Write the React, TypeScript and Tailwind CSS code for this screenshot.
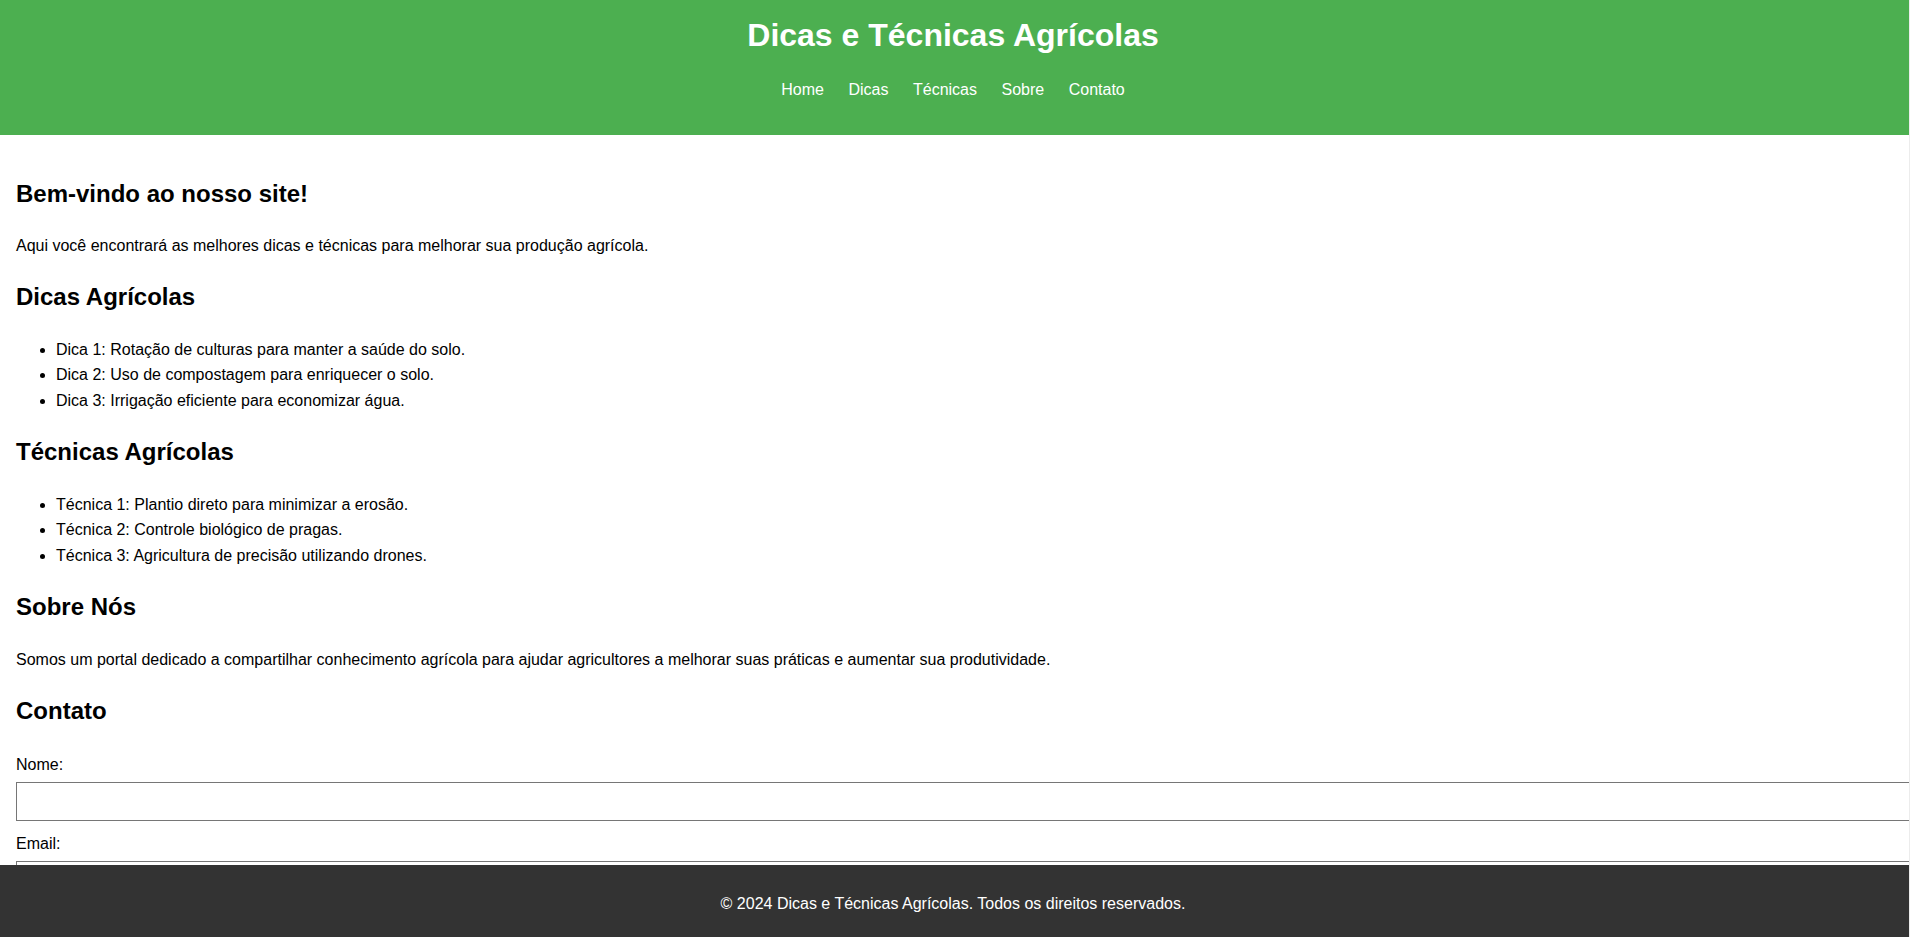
export default function App() {
    const navLinks = ['Home', 'Dicas', 'Técnicas', 'Sobre', 'Contato'];

    return (
        <div className="min-h-screen bg-white text-black font-['Liberation_Sans',Arial,sans-serif] text-[16px] leading-[1.6] overflow-x-hidden">
            <header className="bg-[#4CAF50] text-white text-center pt-[10px] pb-[32px] pr-1">
                <h1 className="text-[32px] font-bold leading-[51px]">Dicas e Técnicas Agrícolas</h1>
                <nav className="mt-[16px]">
                    <ul className="flex justify-center gap-[24.5px] leading-[25.6px]">
                        {navLinks.map((link) => (
                            <li key={link}>
                                <a href={`#${link.toLowerCase()}`} className="text-white no-underline">
                                    {link}
                                </a>
                            </li>
                        ))}
                    </ul>
                </nav>
            </header>

            <main className="px-4 pt-5 pb-[100px]">
                <section>
                    <h2 className="text-[24px] font-bold leading-[38.4px] mt-[19.92px]">Bem-vindo ao nosso site!</h2>
                    <p className="mt-[19.92px]">Aqui você encontrará as melhores dicas e técnicas para melhorar sua produção agrícola.</p>
                </section>

                <section id="dicas">
                    <h2 className="text-[24px] font-bold leading-[38.4px] mt-[19.92px]">Dicas Agrícolas</h2>
                    <ul className="list-disc pl-10 mt-[19.92px]">
                        <li>Dica 1: Rotação de culturas para manter a saúde do solo.</li>
                        <li>Dica 2: Uso de compostagem para enriquecer o solo.</li>
                        <li>Dica 3: Irrigação eficiente para economizar água.</li>
                    </ul>
                </section>

                <section id="tecnicas">
                    <h2 className="text-[24px] font-bold leading-[38.4px] mt-[19.92px]">Técnicas Agrícolas</h2>
                    <ul className="list-disc pl-10 mt-[19.92px]">
                        <li>Técnica 1: Plantio direto para minimizar a erosão.</li>
                        <li>Técnica 2: Controle biológico de pragas.</li>
                        <li>Técnica 3: Agricultura de precisão utilizando drones.</li>
                    </ul>
                </section>

                <section id="sobre">
                    <h2 className="text-[24px] font-bold leading-[38.4px] mt-[19.92px]">Sobre Nós</h2>
                    <p className="mt-[19.92px]">Somos um portal dedicado a compartilhar conhecimento agrícola para ajudar agricultores a melhorar suas práticas e aumentar sua produtividade.</p>
                </section>

                <section id="contato">
                    <h2 className="text-[24px] font-bold leading-[38.4px] mt-[19.92px]">Contato</h2>
                    <form className="mt-[21px]">
                        <label htmlFor="nome" className="block">Nome:</label>
                        <input id="nome" type="text" className="block mt-[5px] w-[calc(100%+18px)] h-[38.4px] px-2 border border-[#767676] bg-white" />
                        <label htmlFor="email" className="block mt-[10px]">Email:</label>
                        <input id="email" type="email" className="block mt-[5px] w-[calc(100%+18px)] h-[38.4px] px-2 border border-[#767676] bg-white" />
                        <label htmlFor="mensagem" className="block mt-[10px]">Mensagem:</label>
                        <textarea id="mensagem" className="block mt-[5px] w-[calc(100%+18px)] h-[100px] p-2 border border-[#767676]" />
                    </form>
                </section>
            </main>

            <footer className="fixed bottom-0 left-0 w-full bg-[#333333] text-white text-center pt-[26px] pb-[20px] pr-1 leading-[25.6px]">
                <p>© 2024 Dicas e Técnicas Agrícolas. Todos os direitos reservados.</p>
            </footer>

            {/* thin scrollbar track on the right edge */}
            <div className="fixed top-0 right-0 w-px h-full bg-[#ececec] z-10" />
        </div>
    );
}
